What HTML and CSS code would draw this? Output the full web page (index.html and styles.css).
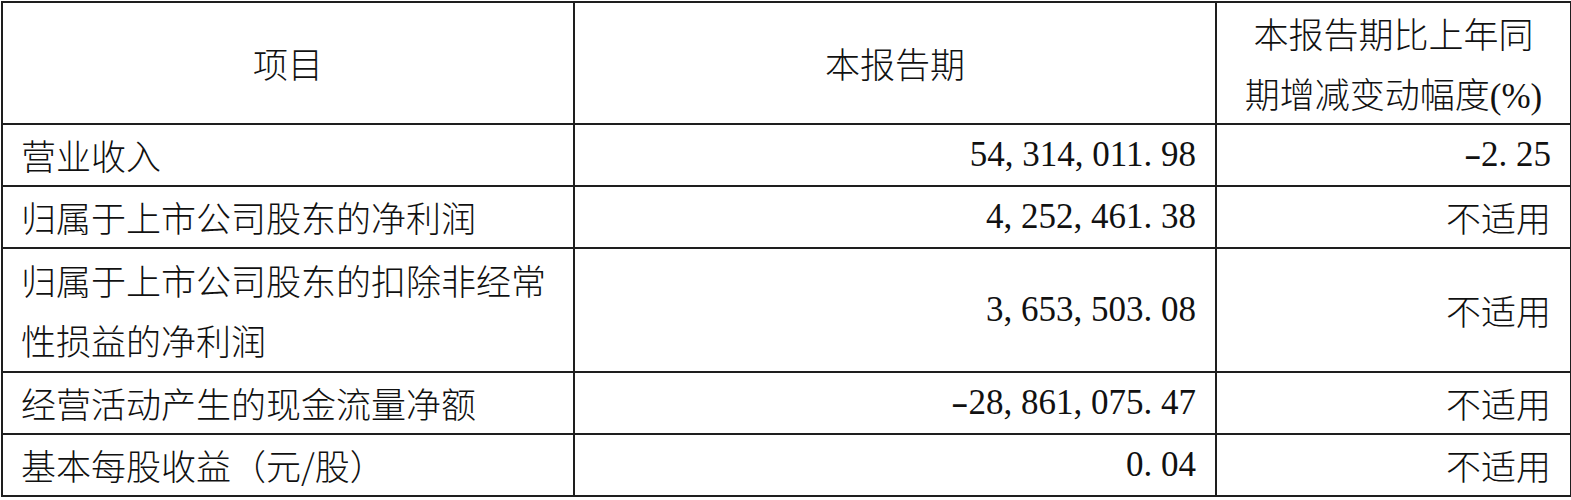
FILE: index.html
```html
<!DOCTYPE html>
<html lang="zh-CN">
<head>
<meta charset="utf-8">
<title>主要会计数据</title>
<link rel="stylesheet" href="styles.css">
</head>
<body>
<table class="tbl">
  <colgroup>
    <col class="c1">
    <col class="c2">
    <col class="c3">
  </colgroup>
  <tr>
    <th>项目</th>
    <th>本报告期</th>
    <th>本报告期比上年同<br>期增减变动幅度<span class="num pct">(%)</span></th>
  </tr>
  <tr>
    <td class="lbl">营业收入</td>
    <td class="val num">54<span class="p">,</span>314<span class="p">,</span>011<span class="p">.</span>98</td>
    <td class="val num"><span class="p m">-</span>2<span class="p">.</span>25</td>
  </tr>
  <tr>
    <td class="lbl">归属于上市公司股东的净利润</td>
    <td class="val num">4<span class="p">,</span>252<span class="p">,</span>461<span class="p">.</span>38</td>
    <td class="val">不适用</td>
  </tr>
  <tr class="tall">
    <td class="lbl">归属于上市公司股东的扣除非经常<br>性损益的净利润</td>
    <td class="val num">3<span class="p">,</span>653<span class="p">,</span>503<span class="p">.</span>08</td>
    <td class="val">不适用</td>
  </tr>
  <tr>
    <td class="lbl">经营活动产生的现金流量净额</td>
    <td class="val num"><span class="p m">-</span>28<span class="p">,</span>861<span class="p">,</span>075<span class="p">.</span>47</td>
    <td class="val">不适用</td>
  </tr>
  <tr>
    <td class="lbl">基本每股收益（元/股）</td>
    <td class="val num">0<span class="p">.</span>04</td>
    <td class="val">不适用</td>
  </tr>
</table>
</body>
</html>
```

FILE: styles.css
```css
html, body {
  margin: 0;
  padding: 0;
  background: #ffffff;
}

body {
  padding: 1px 0 0 1px;
  font-family: "Noto Sans CJK SC", "Noto Sans", sans-serif;
  font-weight: 300;
  color: #111111;
}

.tbl {
  border-collapse: collapse;
  table-layout: fixed;
  width: 1569px;
  font-size: 35px;
  line-height: 60px;
}

.c1 { width: 572px; }
.c2 { width: 642px; }
.c3 { width: 355px; }

.tbl th,
.tbl td {
  border: 2px solid #1e1e1e;
  padding: 0 19px 0 18px;
  vertical-align: middle;
  white-space: nowrap;
}

.tbl .tall td {
  padding-top: 1px;
  padding-bottom: 1px;
}

.tbl th {
  font-weight: 300;
  text-align: center;
  padding-left: 4px;
  padding-right: 4px;
}

.lbl {
  text-align: left;
}

.val {
  text-align: right;
}

.num {
  font-family: "Liberation Serif", serif;
  font-weight: 400;
}

.pct {
  line-height: 1;
}

.p {
  display: inline-block;
  width: 0.5em;
  line-height: 1;
  text-align: left;
}

.p.m {
  text-align: center;
  transform: scaleX(1.5);
}
```
